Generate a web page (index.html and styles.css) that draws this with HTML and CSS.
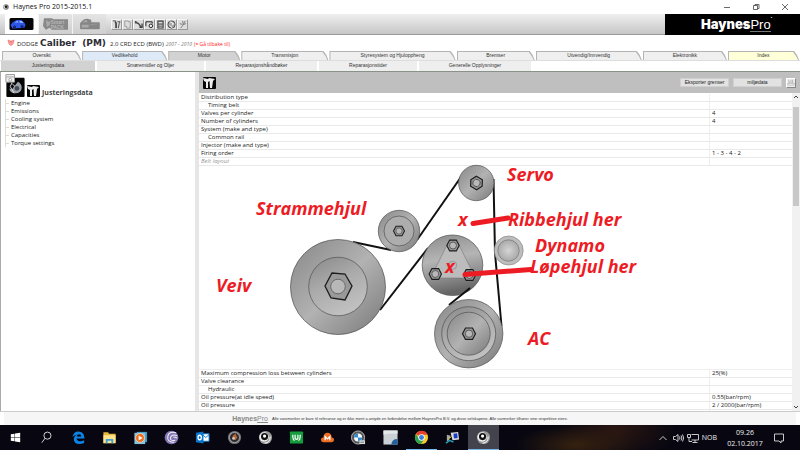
FILE: index.html
```html
<!DOCTYPE html>
<html lang="no">
<head>
<meta charset="utf-8">
<title>Haynes Pro 2015-2015.1</title>
<link rel="stylesheet" href="styles.css">
</head>
<body>
<header class="titlebar">
  <svg class="app-icon" viewBox="0 0 12 12"><circle cx="6" cy="6" r="5.5" fill="#777"/><circle cx="5" cy="6" r="3.6" fill="#ddd"/><circle cx="6" cy="5.500" r="2.400" fill="#111"/></svg>
  <span class="window-name">Haynes Pro 2015-2015.1</span>
  <div class="window-buttons">
    <button aria-label="Minimer"><svg viewBox="0 0 8 8"><path d="M1 4.500h6"/></svg></button>
    <button aria-label="Gjenopprett"><svg viewBox="0 0 8 8"><path d="M1.500 2.500h4v4h-4zM3 2.500v-1h4v4h-1.500"/></svg></button>
    <button aria-label="Lukk"><svg viewBox="0 0 8 8"><path d="M1 1l6 6M7 1l-6 6"/></svg></button>
  </div>
</header>

<div class="toolbar">
  <div class="modes">
    <button class="mode current" aria-label="Personbiler"><svg viewBox="0 0 24 12"><rect width="24" height="12" rx="1.500" fill="#050508"/><path d="M1 7l2-2.500 4-2.500h5l3 3 1 2-1 2.500-3 .5-9 .5z" fill="#2d55e8"/><path d="M5 4.500l3-1.500 1 1.500zM10 3h2l2 2-4-.5z" fill="#a9c2ff"/><circle cx="5" cy="9" r="1.500" fill="#16256e"/><circle cx="12.500" cy="8.500" r="1.500" fill="#16256e"/></svg></button>
    <button class="mode" aria-label="Smart"><svg viewBox="0 0 26 12"><path d="M1 0h8l2 1h15v11H9l-2-2-4 2-3-4z" fill="#888"/><path d="M3 2l3 2 2-2-1 5-3 2z" fill="#aaa"/><text x="8" y="6">Smart</text><text x="8" y="11">PACK</text></svg></button>
    <button class="mode" aria-label="Lastebiler"><svg viewBox="0 0 24 14"><path d="M1 6q4-5 8-5l5 1v3h9q1 0 1 1v6q0 1-1 1H2q-1 0-1-1z" fill="#868686"/><path d="M4 5l4-3 2 3zM3 8h8v3H3z" fill="#aaa"/><path d="M12 8l9-1" stroke="#999"/></svg></button>
  </div>
  <div class="tools">
    <button aria-label="Justering"><svg viewBox="0 0 10 10"><path d="M1 1h3v8M3 3h2v6M6 2h3l-1 2-1 5"/></svg></button>
    <button aria-label="Kopier"><svg viewBox="0 0 10 10"><path d="M2 1h4v1h2v7H4V7H2z" stroke="#999"/></svg></button>
    <button aria-label="Verktøy"><svg viewBox="0 0 10 10"><path d="M1 2l4 2 3 4M6 8h3V4M2 1v3" stroke-width="1.500"/></svg></button>
    <button aria-label="Søk kjøretøy"><svg viewBox="0 0 10 10"><path d="M1 7V2h7v2" stroke="#111"/><circle cx="6.500" cy="6.500" r="2" fill="#eee" stroke="#111"/></svg></button>
    <button aria-label="Kalkulator"><svg viewBox="0 0 10 10"><rect x="2" y="1" width="6" height="8" fill="#777"/><path d="M3 3h4" stroke="#fff"/><path d="M3 6h4M3 8h4" stroke="#ccc" stroke-dasharray="1 .5"/></svg></button>
    <button aria-label="Internett"><svg viewBox="0 0 10 10"><circle cx="5" cy="5" r="4" fill="#aaa"/><path d="M3 2l3 1v2l2-1M3 6l3 3" stroke="#fff"/></svg></button>
    <button aria-label="Innstillinger"><svg viewBox="0 0 10 10"><path d="M3 9l3-4 2-4M5 1l1 4 3-1M2 4l3 1" stroke="#777"/></svg></button>
  </div>
  <div class="brand"><b>Haynes</b><span>Pro</span><sup>•</sup></div>
</div>

<div class="vehicle">
  <svg viewBox="0 0 8 7"><path d="M1 1l1 4 2 1.500L6 5l1-4-2 1H3z" fill="#fbb" stroke="#e66" stroke-width=".7"/><path d="M4 2v4M2 3h4" stroke="#e66" stroke-width=".7"/></svg>
  <span class="make">DODGE</span>
  <h1>Caliber&nbsp; (PM)</h1>
  <span class="engine">2.0 CRD ECD (BWD)</span>
  <i>2007 - 2010</i>
  <a href="#">(= Gå tilbake til)</a>
</div>

<nav class="tabs">
  <a href="#" style="--w:79">Oversikt</a>
  <a href="#" class="blue" style="--w:85">Vedlikehold</a>
  <a href="#" class="dark" style="--w:72">Motor</a>
  <a href="#" style="--w:87">Transmisjon</a>
  <a href="#" style="--w:126">Styresystem og Hjuloppheng</a>
  <a href="#" style="--w:78">Bremser</a>
  <a href="#" style="--w:106">Utvendig/Innvendig</a>
  <a href="#" style="--w:84">Elektronikk</a>
  <a href="#" class="yellow" style="--w:71">Index</a>
</nav>
<nav class="subtabs">
  <a href="#" class="dark" style="--w:94">Justeringsdata</a>
  <a href="#" style="--w:107">Smøremidler og Oljer</a>
  <a href="#" style="--w:111">Reparasjonshåndbøker</a>
  <a href="#" style="--w:98">Reparasjonstider</a>
  <a href="#" style="--w:112">Generelle Opplysninger</a>
  <span style="--w:267"></span>
</nav>

<main>
  <aside>
    <div class="side-head">
      <svg class="big" viewBox="0 0 20 24"><rect x="1" y="4" width="19" height="20" rx="1" fill="#050505"/><path d="M6 9l4 3 3-4q4 2 4 6 0 6-7 6-5 0-6-5l3 1 2-3z" fill="#9aa0a8"/><circle cx="12" cy="15" r="2.500" fill="#444b55"/><path d="M7 9l-2 4 4 7" fill="none" stroke="#ddd"/><path d="M.5.500h9v8h-9z" fill="#eee" stroke="#999"/><path d="M1 3h8" stroke="#aaa"/><circle cx="5" cy="6" r="1.500" fill="#fff" stroke="#888" stroke-width=".7"/></svg>
      <svg class="small" viewBox="0 0 13 12"><rect width="13" height="12" rx="1" fill="#050505"/><path d="M0 1l5 1 1-1 6 1-2 2-1 7H7l-.5-7L5 5v6H3V5L1 4z" fill="#eee"/></svg>
      <h2>Justeringsdata</h2>
    </div>
    <ul>
      <li><a href="#">Engine</a></li>
      <li><a href="#">Emissions</a></li>
      <li><a href="#">Cooling system</a></li>
      <li><a href="#">Electrical</a></li>
      <li><a href="#">Capacities</a></li>
      <li><a href="#">Torque settings</a></li>
    </ul>
  </aside>

  <section class="detail">
    <div class="detail-head">
      <svg viewBox="0 0 13 12"><rect width="13" height="12" rx="1" fill="#050505"/><path d="M0 1l5 1 1-1 6 1-2 2-1 7H7l-.5-7L5 5v6H3V5L1 4z" fill="#eee"/></svg>
      <button class="text-button">Eksporter grenser</button>
      <button class="text-button">miljødata</button>
      <button class="print" aria-label="Skriv ut"><svg viewBox="0 0 10 10"><path d="M2 1l1 4M5 1v4M7 1v4" stroke="#aaa" fill="none"/><path d="M1 5.500h8v2H1z" fill="#fff" stroke="#999" stroke-width=".7"/></svg></button>
    </div>
    <div class="scroll-area">
      <div class="data">
        <table>
          <colgroup><col><col class="value"></colgroup>
          <tbody>
            <tr><td>Distribution type</td><td></td></tr>
            <tr><td class="sub">Timing belt</td><td></td></tr>
            <tr><td>Valves per cylinder</td><td>4</td></tr>
            <tr><td>Number of cylinders</td><td>4</td></tr>
            <tr><td>System (make and type)</td><td></td></tr>
            <tr><td class="sub">Common rail</td><td></td></tr>
            <tr><td>Injector (make and type)</td><td></td></tr>
            <tr><td>Firing order</td><td>1 - 3 - 4 - 2</td></tr>
            <tr><td class="note">Belt layout</td><td></td></tr>
            <tr class="figure"><td colspan="2">
              <svg viewBox="199 166 593 204" role="img" aria-label="Belt layout">
                <defs>
                  <linearGradient id="metal" x1="0" y1="0" x2="1" y2="1"><stop offset="0" stop-color="#888"/><stop offset=".2" stop-color="#989898"/><stop offset=".5" stop-color="#b2b2b2"/><stop offset=".8" stop-color="#909090"/><stop offset="1" stop-color="#747474"/></linearGradient>
                  <linearGradient id="disc" x1="0" y1="0" x2=".5" y2="1"><stop offset="0" stop-color="#888"/><stop offset=".5" stop-color="#aaa"/><stop offset="1" stop-color="#c0c0c0"/></linearGradient>
                  <linearGradient id="pump" x1="0" y1="0" x2=".2" y2="1"><stop offset="0" stop-color="#8b8b8b"/><stop offset=".45" stop-color="#b5b5b5"/><stop offset=".75" stop-color="#8d8d8d"/><stop offset="1" stop-color="#666"/></linearGradient>
                  <radialGradient id="soft"><stop offset="0" stop-color="#d4d4d4"/><stop offset="1" stop-color="#aaa"/></radialGradient>
                  <g id="bolt"><path d="M-6.500 0L-3.500-5.700H3.500L6.500 0 3.500 5.700H-3.500z" fill="#999" stroke="#1c1c1c" stroke-width="1.200"/><circle r="3.700" fill="#b8b8b8" stroke="#444" stroke-width=".8"/></g>
                </defs>
                <g class="belt">
                  <path d="M353 242L391 250"/><path d="M380 310L428 248"/><path d="M417 240L461 177"/><path d="M493.500 179L495 253 501.500 326"/>
                </g>
                <g class="wheel">
                  <circle cx="338" cy="287" r="47.500" fill="url(#metal)"/><circle cx="338" cy="286.500" r="29.300" fill="url(#disc)"/>
                  <path d="M325 286l7-13 13 1 7 12-7 14-14-2z" fill="#999" stroke="#1c1c1c" stroke-width="1.300"/><circle cx="338" cy="286.500" r="7.300" fill="#b8b8b8"/>
                  <circle cx="399" cy="231" r="20.700" fill="url(#metal)"/><circle cx="399" cy="231" r="15" fill="#adadad"/>
                  <circle cx="476.300" cy="183" r="17.700" fill="url(#metal)"/>
                  <circle cx="508.700" cy="250.500" r="14.500" fill="#bdbdbd" stroke="#888"/><circle cx="508.500" cy="250.500" r="10.700" fill="url(#soft)" stroke="#777"/>
                  <circle cx="452.500" cy="265.300" r="30.300" fill="url(#pump)"/>
                  <path d="M448.500 242l-15 30q0 6 5 6h30q5 0 4-6l-15-30z" fill="#bcbcbc" stroke="#777" stroke-width=".6"/><circle cx="452.700" cy="265.300" r="4" fill="#bbb" stroke="#888"/>
                  <path d="M470 288L449 305" stroke="#111" stroke-width="2"/>
                  <circle cx="468.700" cy="333.700" r="34.200" fill="url(#metal)"/><circle cx="468.700" cy="333.700" r="27" fill="url(#disc)"/><circle cx="468.700" cy="333.700" r="21.500" fill="url(#metal)"/>
                </g>
                <use href="#bolt" transform="translate(399 231) scale(.85)"/>
                <use href="#bolt" transform="translate(476.500 183) rotate(30)"/>
                <use href="#bolt" transform="translate(453 245.500) scale(.95)"/>
                <use href="#bolt" transform="translate(435.300 274) scale(.95)"/>
                <use href="#bolt" transform="translate(469.500 275) scale(.95)"/>
                <use href="#bolt" transform="translate(469 333.700)"/>
                <g class="marks"><path d="M473 223.500L508 218"/><path d="M465 274.500L531 269.500"/></g>
                <g class="labels">
                  <text x="507" y="181">Servo</text>
                  <text x="256" y="215">Strammehjul</text>
                  <text x="458" y="226">x</text>
                  <text x="508" y="226">Ribbehjul her</text>
                  <text x="535" y="252">Dynamo</text>
                  <text x="445" y="273">x</text>
                  <text x="530" y="273">Løpehjul her</text>
                  <text x="216" y="292">Veiv</text>
                  <text x="528" y="345">AC</text>
                </g>
              </svg>
            </td></tr>
            <tr><td>Maximum compression loss between cylinders</td><td>25(%)</td></tr>
            <tr><td>Valve clearance</td><td></td></tr>
            <tr><td class="sub">Hydraulic</td><td></td></tr>
            <tr><td>Oil pressure(at idle speed)</td><td>0.55(bar/rpm)</td></tr>
            <tr><td>Oil pressure</td><td>2 / 2000(bar/rpm)</td></tr>
            <tr><td>Oil pressure(test speed)</td><td>30(bar/rpm)</td></tr>
          </tbody>
        </table>
      </div>
      <div class="scrollbar">
        <svg viewBox="0 0 8 8"><path d="M2 5l2-2 2 2"/></svg>
        <div class="thumb"></div>
        <svg viewBox="0 0 8 8"><path d="M2 3l2 2 2-2"/></svg>
      </div>
    </div>
  </section>
</main>

<footer><span class="mini-brand"><b>Haynes</b><u>Pro</u></span><span>Alle varemerker er bare til referanse og er ikke ment å antyde en forbindelse mellom HaynesPro B.V. og disse selskapene. Alle varmerker tilhører sine respektive eiere.</span></footer>

<div class="taskbar">
  <div class="apps">
    <button aria-label="Start"><svg viewBox="0 0 16 16"><path d="M3 4.500l4-.6V7.700H3zM7.500 3.800L13 3v4.700H7.500zM3 8.300h4v3.800l-4-.6zM7.500 8.300H13V13l-5.500-.8z" fill="#fff"/></svg></button>
    <button aria-label="Søk"><svg viewBox="0 0 16 16"><circle cx="9" cy="6" r="3.800" fill="none" stroke="#ddd"/><path d="M6.300 9L3 13.500" stroke="#ddd"/></svg></button>
    <button aria-label="Edge"><svg viewBox="0 0 16 16"><path d="M1.500 7.500Q2.500 1.500 8 1.500q6 0 6.500 7.500H6q.3 3 4 3 2 0 4-1.200v3Q11.500 15 9 15q-6-.5-6-5.500 0-3 3-4.500Q3 5.500 1.500 7.500zM6 7h5q0-2.500-2.300-2.500T6 7z" fill="#0b84e5"/></svg></button>
    <button aria-label="Filutforsker"><svg viewBox="0 0 16 16"><path d="M1.500 2.500h5l1 1.500h7v10h-13z" fill="#e8b93d"/><path d="M1.500 5.500h13v8.500h-13z" fill="#ffe28a"/><path d="M4 14v-4.500h8V14h-2v-2.500H6V14z" fill="#3ba3dc"/></svg></button>
    <button aria-label="Mediespiller"><svg viewBox="0 0 16 16"><path d="M4 2h11v11H4z" fill="#3f97c7"/><path d="M1.500 3h11.500v12H1.500z" fill="#84c3dd"/><circle cx="7.500" cy="8.500" r="4.700" fill="#ef6c1a" stroke="#ffe0c5" stroke-width=".7"/><path d="M6 5.800l4.200 2.700L6 11.200z" fill="#fff"/></svg></button>
    <button aria-label="BitTorrent"><svg viewBox="0 0 16 16"><circle cx="8" cy="8" r="7.300" fill="#8576b8"/><path d="M13 3Q5 1 4 7t7 6M14 6Q8 4 7 8t5 3M10 7.500q2 0 4 1" fill="none" stroke="#eee" stroke-width="1.100"/></svg></button>
    <button aria-label="Outlook"><svg viewBox="0 0 16 16"><path d="M8 4h7v8H8z" fill="#fff" stroke="#0874ca"/><path d="M8 5l3.500 3L15 5" fill="none" stroke="#0874ca"/><path d="M1 3l8-1.500v13L1 13z" fill="#0874ca"/><ellipse cx="5" cy="8" rx="1.800" ry="2.400" fill="none" stroke="#fff" stroke-width="1.400"/></svg></button>
    <button aria-label="Måler"><svg viewBox="0 0 16 16"><circle cx="8" cy="8" r="7" fill="#777"/><circle cx="8" cy="8" r="5.300" fill="#28292d" stroke="#aaa"/><path d="M6 6l3-2 2 4-2 3-3-2z" fill="#ba6436"/><circle cx="7" cy="9" r="1.500" fill="#ccc"/></svg></button>
    <button aria-label="Autodata"><svg viewBox="0 0 16 16"><circle cx="8" cy="8" r="7" fill="#999"/><circle cx="6.500" cy="7.500" r="5" fill="#eee"/><circle cx="7" cy="7" r="3.800" fill="#111"/><circle cx="7" cy="6.500" r="1.700" fill="#fff"/><path d="M7 14q6 0 6-7" fill="none" stroke="#fff"/></svg></button>
    <button aria-label="VU"><svg viewBox="0 0 16 16"><rect x="1" y="1.500" width="14" height="13" rx="1" fill="#159d3d"/><path d="M4 5q0 6 2 6M12 5q0 6-2 6M6.500 5v4q1.500 2 3 0V5" fill="none" stroke="#fff" stroke-width="1.300"/></svg></button>
    <button aria-label="M-sky"><svg viewBox="0 0 16 16"><path d="M3.500 13Q1 13 1 10.500T3.500 8Q4 3 8 3t4.500 5q2.500 0 2.500 2.500T12.500 13z" fill="#ef6d22"/><path d="M5.500 11V7L8 9.500 10.500 7v4" fill="none" stroke="#fff" stroke-width="1.300"/></svg></button>
    <button aria-label="BMW"><svg viewBox="0 0 16 16"><circle cx="7.500" cy="8" r="7" fill="#555" stroke="#bbb"/><circle cx="7.500" cy="8" r="4.300" fill="#fff"/><path d="M7.500 8V3.700A4.300 4.300 0 0 0 3.200 8zM7.500 8v4.300A4.300 4.300 0 0 0 11.800 8z" fill="#2c8bd2"/><path d="M9 11h6v4H9z" fill="#ddd"/><path d="M10 13h4" stroke="#666"/></svg></button>
    <button aria-label="Kart"><svg viewBox="0 0 16 16"><path d="M.5.500h15v15H.5z" fill="#cad1d5"/><path d="M.5 5q6-2 15-1v-3.500h-15z" fill="#e3e8ea"/><path d="M9 15.500q0-6 6.500-6v6z" fill="#245f9b"/></svg></button>
    <button class="running" aria-label="Chrome"><svg viewBox="0 0 16 16"><circle cx="8" cy="8" r="7" fill="#f6c927"/><path d="M8 8L2 4.300A7 7 0 0 1 14.500 5H8z" fill="#e3402f"/><path d="M2 4.300A7 7 0 0 0 7.500 15L10.500 10 8 8 5 9z" fill="#2ba24c"/><circle cx="8" cy="8" r="3.400" fill="#fff"/><circle cx="8" cy="8" r="2.600" fill="#3b7de0"/></svg></button>
    <button aria-label="Diagnose"><svg viewBox="0 0 16 16"><path d="M6 3l8-1 1 8-7 1z" fill="#ddd"/><path d="M9 4l4-.5.5 5-4 .5z" fill="#173cc9"/><path d="M2 5l4 1-2 5-2 1z" fill="#aaa"/><path d="M1 14l4-3 4 2" stroke="#25a3bb" stroke-width="1.500" fill="none"/><path d="M3 10l4-3" stroke="#d6c832"/></svg></button>
    <button class="running active" aria-label="HaynesPro"><svg viewBox="0 0 16 16"><circle cx="8" cy="8" r="7" fill="#999"/><circle cx="6.500" cy="7.500" r="5" fill="#eee"/><circle cx="7" cy="7" r="3.800" fill="#111"/><circle cx="7" cy="6.500" r="1.700" fill="#fff"/><path d="M7 14q6 0 6-7" fill="none" stroke="#fff"/></svg></button>
  </div>
  <div class="tray">
    <svg viewBox="0 0 12 12"><path d="M2.500 8L6 4.500 9.500 8"/></svg>
    <svg viewBox="0 0 12 12"><path d="M1.500 4.500h2L6 2.500v7L3.500 7.500h-2zM7.500 4.500q1 1.500 0 3M9 3.500q1.800 2.500 0 5M10.500 2.500q2.300 3.500 0 7"/></svg>
    <svg viewBox="0 0 12 12"><path d="M4.500 2.500h7v5.500h-7M8 8v2M5.500 10.500h5M.5 2.500h3v3h-3zM2 5.500v4h3"/></svg>
    <span>NOB</span>
    <time>09.26<br>02.10.2017</time>
    <svg viewBox="0 0 12 12"><path d="M1.500 2h9v7H8v2L6 9H1.500z"/></svg>
  </div>
</div>
</body>
</html>
```
FILE: styles.css
```css
* { box-sizing: border-box; }

body {
  margin: 0;
  height: 100vh;
  display: flex;
  flex-direction: column;
  overflow: hidden;
  background: #fff;
  color: #222;
  font: 6px/8px "Open Sans", sans-serif;
}

button {
  padding: 0;
  border: 0;
  background: none;
  color: inherit;
  font: inherit;
}

a { color: inherit; text-decoration: none; }
svg { display: block; flex: none; }
h1, h2 { margin: 0; }

/* window frame */
.titlebar {
  height: 14px;
  flex: none;
  display: flex;
  align-items: center;
  padding: 0 11px 0 3px;
  gap: 4px;
  font-size: 7px;
  line-height: 14px;
  color: #111;
}
.app-icon { width: 6px; height: 6px; }
.window-buttons { margin-left: auto; display: flex; gap: 21px; }
.window-buttons svg { width: 8px; height: 8px; fill: none; stroke: #444; stroke-width: .8; }

/* toolbar */
.toolbar {
  height: 21px;
  flex: none;
  display: flex;
  padding-left: 5px;
  background: linear-gradient(#efefef, #c6c6c6);
  border-bottom: 1px solid #999;
}
.modes { display: flex; gap: 1px; background: #f4f4f4; }
.mode { width: 33px; display: grid; place-items: center; background: linear-gradient(#e4e4e4, #cfcfcf); }
.mode.current { background: #fff; }
.mode svg { width: 25px; height: 12px; }
.mode text { font: bold 5px "Liberation Sans", sans-serif; fill: #b5b5b5; }
.tools { display: flex; align-items: center; margin-left: 5px; }
.tools button { width: 11px; height: 11px; border: 1px solid; border-color: #f6f6f6 #999 #999 #f6f6f6; background: #ddd; }
.tools svg { width: 9px; height: 9px; fill: none; stroke: #444; }
.brand {
  margin: 0 0 -1px auto;
  width: 135px;
  padding: 0 26px 0 34px;
  display: flex;
  justify-content: center;
  background: #000;
  color: #fff;
  font: 13px/20px "Liberation Sans", sans-serif;
}
.brand b { font-family: Inter, sans-serif; font-weight: 900; }
.brand span { align-self: center; line-height: 13px; border-bottom: 1px solid #777; }
.brand sup { font-size: 4px; line-height: 8px; }

/* vehicle line */
.vehicle {
  height: 16px;
  flex: none;
  display: flex;
  align-items: baseline;
  gap: 2px;
  padding-left: 7px;
  line-height: 16px;
}
.vehicle svg { width: 8px; height: 7px; }
.vehicle h1 { font: bold 9px/16px "DejaVu Sans", sans-serif; color: #2c2c34; }
.vehicle .engine { margin-left: 2px; }
.vehicle i { color: #777; font-size: 5px; }
.vehicle a { color: #f22; font-size: 5px; }

/* tabs */
.tabs {
  height: 10px;
  flex: none;
  display: flex;
  gap: 1px;
  padding: 0 1px 0 2px;
  border-bottom: 1px solid #ddd;
}
.tabs a, .subtabs a {
  font: 5px/9px "Liberation Sans", sans-serif;
  text-align: center;
  color: #333;
}
.tabs a {
  --face: #efefef;
  flex: var(--w) 1 0;
  position: relative;
  z-index: 0;
  background: #b4b4b4;
  clip-path: polygon(0 0, calc(100% - 5px) 0, calc(100% - 2px) 4px, 100% 100%, 0 100%);
}
.tabs a::before {
  content: "";
  position: absolute;
  inset: 1px 1px 0 1px;
  z-index: -1;
  background: var(--face);
  clip-path: polygon(0 0, calc(100% - 5px) 0, calc(100% - 2px) 4px, 100% 100%, 0 100%);
}
.tabs .blue { --face: #dfeaf8; }
.tabs .dark { --face: #d2d2d2; }
.tabs .yellow { --face: #ffffd8; }
.subtabs {
  height: 11px;
  flex: none;
  display: flex;
  gap: 2px;
  padding-left: 1px;
  border-bottom: 1px solid #899189;
}
.subtabs > * { flex: var(--w) 1 0; background: #eee; }
.subtabs .dark { background: #d2d2d2; }
.subtabs span { background: #fff; }

/* content */
main { flex: 1; min-height: 0; display: flex; border-bottom: 1px solid #ccc; }
aside {
  flex: 0 0 199px;
  padding: 2px 0 0 4px;
  border-left: 1px solid #aaa;
  border-right: 4px solid #e6e6e6;
}
.side-head { display: flex; align-items: flex-end; gap: 2px; }
.side-head .big { width: 20px; height: 23px; }
.side-head .small { width: 13px; height: 12px; }
.side-head h2 { font-size: 7px; line-height: 8px; color: #444; }
aside ul { list-style: none; margin: 2px 0 0; padding: 0; }
aside li { display: flex; align-items: center; gap: 2px; height: 8px; border-left: 1px solid #ddd; }
aside li::before { content: ""; width: 3px; height: 1px; background: #ddd; }

.detail { flex: 1; min-width: 0; display: flex; flex-direction: column; }
.detail-head {
  height: 21px;
  flex: none;
  display: flex;
  align-items: center;
  gap: 4px;
  padding: 0 4px;
  background: #bfbfbf;
}
.detail-head > svg { width: 13px; height: 12px; margin-right: auto; }
.text-button { width: 49px; height: 9px; background: #e2e2e2; border: 1px solid #d0d0d0; font: 5px/7px "Liberation Sans", sans-serif; }
.print { width: 10px; height: 10px; background: #eee; border: 1px solid; border-color: #fff #888 #888 #fff; }
.print svg { width: 8px; height: 8px; }

.scroll-area { flex: 1; min-height: 0; display: flex; }
.data { flex: 1; min-width: 0; overflow: hidden; padding-top: 1px; }
table { width: 100%; border-collapse: separate; border-spacing: 0; table-layout: fixed; }
.value { width: 14%; }
td {
  height: 8px;
  padding: 0 2px;
  border-bottom: 1px solid #e9e9e9;
  line-height: 7px;
  white-space: nowrap;
}
td + td { border-left: 1px solid #eee; }
.sub { padding-left: 9px; }
.note { color: #999; font-style: italic; }
.figure td { padding: 0; border-bottom-color: #eee; }
.figure svg { width: 100%; height: auto; margin-bottom: -1px; overflow: visible; }

.belt { fill: none; stroke: #111; stroke-width: 2; }
.wheel { stroke: #505050; stroke-width: .7; }
.marks { stroke: #ed1c24; stroke-width: 5; stroke-linecap: round; }
.labels { fill: #ed1c24; font: italic bold 18px "Open Sans", sans-serif; }

.scrollbar { width: 8px; display: flex; flex-direction: column; justify-content: space-between; background: #f1f1f1; }
.scrollbar svg { width: 8px; height: 8px; fill: none; stroke: #444; }
.thumb { flex: 0 0 31%; margin: 6px 1px auto; background: #c8c8c8; }

/* footer */
footer {
  height: 13px;
  flex: none;
  display: flex;
  align-items: center;
  justify-content: center;
  gap: 4px;
  margin: 0 4px;
  background: #f6f6f6;
  font: 4px/8px "Liberation Sans", sans-serif;
  color: #333;
}
.mini-brand { font-size: 7px; color: #888; }

/* taskbar */
.taskbar {
  height: 25px;
  flex: none;
  display: flex;
  justify-content: space-between;
  background:
    radial-gradient(ellipse 60px 20px at 72% 80%, #35210f, transparent),
    radial-gradient(ellipse 60px 30px at 77% 20%, #2b1712, transparent),
    #080711;
  color: #eee;
}
.apps { flex: 0 0 62.4%; display: flex; }
.apps button { flex: 1; display: grid; place-items: center; border-bottom: 1px solid transparent; }
.apps svg { width: 15px; height: 15px; }
.apps .running { border-bottom-color: #76b9ed; }
.apps .active { background: #42434c; }
.tray {
  display: flex;
  align-items: center;
  gap: 3px;
  padding-right: 15px;
  font-size: 7px;
  line-height: 11px;
}
.tray svg { width: 12px; height: 12px; fill: none; stroke: #ddd; stroke-width: .9; }
.tray time { width: 50px; text-align: center; }
```
